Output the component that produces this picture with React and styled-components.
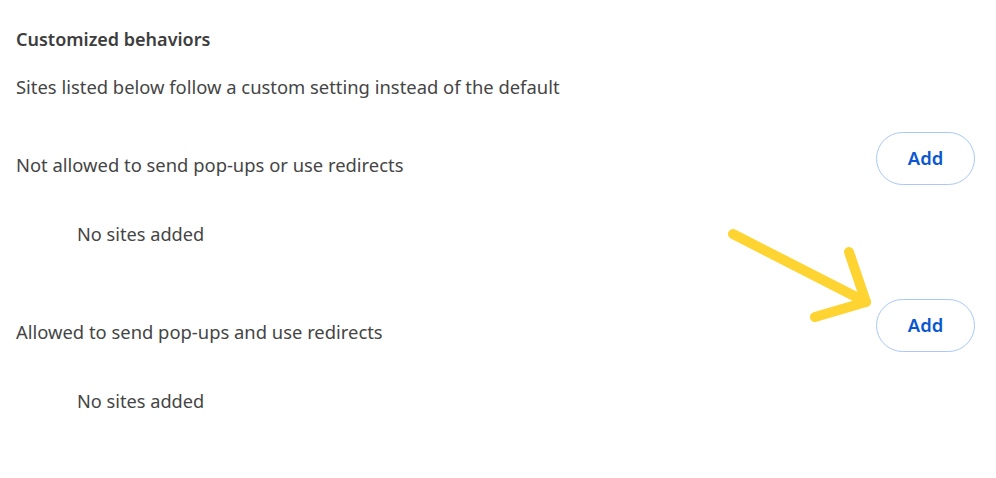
import React from "react";
import styled, { createGlobalStyle } from "styled-components";

const Global = createGlobalStyle`
  html, body { margin: 0; padding: 0; background: #ffffff; }
  body { font-family: "Noto Sans", "Open Sans", sans-serif; }
`;

const Page = styled.div`
  position: relative;
  width: 996px;
  height: 478px;
  box-sizing: border-box;
  padding: 27px 21px 0 16px;
  color: #454545;
  overflow: hidden;
`;

const Title = styled.h2`
  margin: 0;
  font-size: 18px;
  font-weight: 600;
  line-height: 24px;
  color: #3d3d3d;
`;

const Subtitle = styled.p`
  margin: 23.5px 0 0;
  font-size: 18.4px;
  line-height: 24px;
`;

const Row = styled.div`
  display: flex;
  justify-content: space-between;
  align-items: flex-start;
  height: 66px;
  margin-top: ${(p) => p.$top}px;
`;

const Label = styled.span`
  font-size: 18.4px;
  line-height: 66px;
`;

const AddButton = styled.button`
  width: 99px;
  height: 53px;
  border: 1px solid #a8c7fa;
  border-radius: 27px;
  background: #fff;
  color: #0b57d0;
  font-family: inherit;
  font-size: 18.4px;
  font-weight: 600;
  padding: 0 0 2px;
  cursor: pointer;
`;

const Empty = styled.div`
  margin: 24px 0 0 61px;
  font-size: 18.2px;
  line-height: 24px;
`;

const Arrow = styled.svg`
  position: absolute;
  left: 0;
  top: 0;
  pointer-events: none;
`;

export default function App() {
  return (
    <Page>
      <Global />
      <Title>Customized behaviors</Title>
      <Subtitle>Sites listed below follow a custom setting instead of the default</Subtitle>
      <Row $top={33.5}>
        <Label>Not allowed to send pop-ups or use redirects</Label>
        <AddButton>Add</AddButton>
      </Row>
      <Empty>No sites added</Empty>
      <Row $top={53}>
        <Label>Allowed to send pop-ups and use redirects</Label>
        <AddButton>Add</AddButton>
      </Row>
      <Empty>No sites added</Empty>
      <Arrow width="996" height="478" viewBox="0 0 996 478">
        <g fill="none" stroke="#fdd431" strokeWidth="10" strokeLinecap="round" strokeLinejoin="round">
          <path d="M733 234 L866 302" />
          <path d="M849 252 L866 302 L815 317" />
        </g>
      </Arrow>
    </Page>
  );
}
